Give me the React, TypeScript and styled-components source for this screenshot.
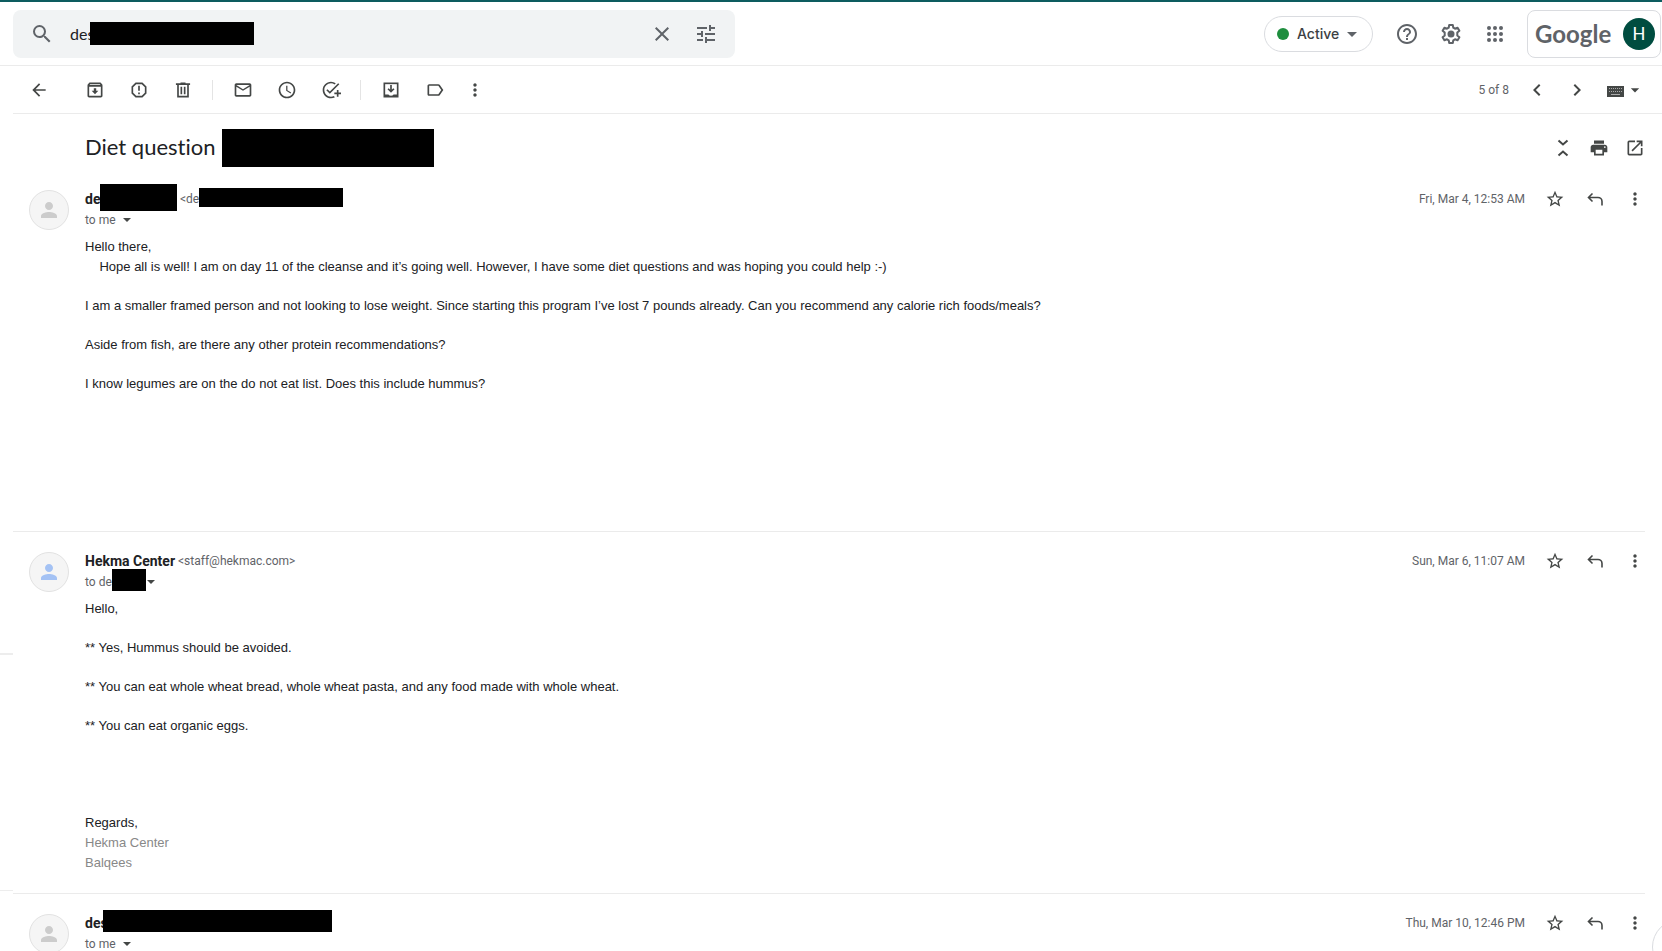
import React from 'react';
import styled, { createGlobalStyle } from 'styled-components';
import {
  MdSearch, MdClose, MdTune, MdHelpOutline, MdArrowDropDown,
  MdArrowBack, MdOutlineArchive, MdOutlineMailOutline, MdAccessTime, MdOutlineAddTask,
  MdOutlineLabel, MdMoreVert, MdChevronLeft, MdChevronRight,
  MdPrint, MdOpenInNew, MdStarBorder, MdPerson,
} from 'react-icons/md';

const GlobalStyle = createGlobalStyle`
  * { box-sizing: border-box; }
  body { margin: 0; background: #fff; color: #202124; font-family: Roboto, "Liberation Sans", sans-serif; }
  button { border: 0; padding: 0; background: none; font: inherit; color: inherit; cursor: pointer; }
  svg { display: block; flex: none; }
  p, h1, h2 { margin: 0; }
`;

const Page = styled.div`
  display: flex;
  flex-direction: column;
  height: 100vh;
  overflow: hidden;
  position: relative;
  border-top: 2px solid #0d5c5f;
`;

const Header = styled.header`
  display: flex;
  align-items: center;
  justify-content: space-between;
  flex: none;
  height: 64px;
  padding: 0 1px 0 13px;
  border-bottom: 1px solid #ebebeb;
`;

const SearchBox = styled.form`
  display: flex;
  align-items: center;
  flex: 0 1 722px;
  height: 48px;
  padding: 0 17px;
  gap: 20px;
  border-radius: 8px;
  background: #f1f3f4;
  color: #5f6368;
`;

const SearchField = styled.div`
  position: relative;
  display: flex;
  align-items: center;
  flex: 1;
  height: 100%;
  margin-left: -4px;
`;

const SearchInput = styled.input`
  width: 100%;
  border: 0;
  padding: 0;
  outline: 0;
  background: none;
  font: 16px Lato, sans-serif;
  color: #202124;
`;

const Redaction = styled.span<{ $w: number; $h: number; $raised?: boolean }>`
  flex: none;
  width: ${(p) => p.$w}px;
  height: ${(p) => p.$h}px;
  margin-bottom: ${(p) => (p.$raised ? 4 : 0)}px;
  background: #000;
`;

const SearchRedaction = styled(Redaction)`
  position: absolute;
  left: 20px;
`;

const HeaderActions = styled.div`
  display: flex;
  align-items: center;
  gap: 20px;
  color: #5f6368;
`;

const StatusButton = styled.button`
  display: flex;
  align-items: center;
  height: 36px;
  margin-right: 2px;
  padding: 0 8px 0 12px;
  border: 1px solid #dadce0;
  border-radius: 18px;
  color: #5f6368;
`;

const StatusDot = styled.span`
  width: 12px;
  height: 12px;
  border-radius: 50%;
  background: #1e8e3e;
`;

const StatusLabel = styled.span`
  min-width: 51px;
  padding-left: 8px;
  color: #3c4043;
  font: 500 14px Inter, sans-serif;
  text-align: left;
`;

const Account = styled.a`
  display: flex;
  align-items: center;
  justify-content: space-between;
  width: 134px;
  height: 48px;
  padding: 0 5px 0 7px;
  border: 1px solid #dadce0;
  border-radius: 8px;
  text-decoration: none;
`;

const Wordmark = styled.span`
  font: 700 24px/32px Lato, sans-serif;
  color: #5f6368;
`;

const AccountInitial = styled.span`
  width: 32px;
  border-radius: 50%;
  background: #004d40;
  color: #fff;
  font: 18px/32px Roboto, sans-serif;
  text-align: center;
`;

const Columns = styled.div`
  display: flex;
  flex: 1;
  min-height: 0;
`;

const Gutter = styled.aside`
  display: flex;
  flex-direction: column;
  gap: 235px;
  flex: none;
  width: 13px;
  padding-top: 587px;
`;

const GutterRule = styled.span<{ $h: number }>`
  flex: none;
  height: ${(p) => p.$h}px;
  background: #ededed;
`;

const Main = styled.main`
  flex: 1;
  min-width: 0;
`;

const Toolbar = styled.div`
  display: flex;
  align-items: center;
  justify-content: space-between;
  height: 48px;
  padding: 0 17px 0 16px;
  border-bottom: 1px solid #ebebeb;
  color: #444746;
`;

const Group = styled.div<{ $gap: number }>`
  display: flex;
  align-items: center;
  gap: ${(p) => p.$gap}px;
`;

const Divider = styled.span`
  width: 1px;
  height: 20px;
  margin-left: -1px;
  background: #e4e4e4;
`;

const IconButton = styled.button`
  display: flex;
  align-items: center;
  flex: none;
`;

const Back = styled(IconButton)`
  margin-right: 16px;
`;

const Muted = styled.span`
  font-size: 12px;
  color: #5f6368;
  white-space: nowrap;
`;

const SubjectRow = styled.div`
  display: flex;
  align-items: center;
  justify-content: space-between;
  height: 56px;
  padding: 12px 17px 0 72px;
  color: #444746;
`;

const Subject = styled.h1`
  display: flex;
  align-items: flex-start;
  gap: 6px;
  font: 22px/36px Lato, sans-serif;
  font-variant-ligatures: none;
  color: #202124;
`;

const Message = styled.article`
  display: flex;
  align-items: flex-start;
  gap: 16px;
  margin-right: 17px;
  padding: 19px 0 20px 16px;
  color: #444746;
  & + & { border-top: 1px solid #ebebeb; }
`;

const Avatar = styled.span<{ $color: string }>`
  display: flex;
  align-items: center;
  justify-content: center;
  flex: none;
  width: 40px;
  height: 40px;
  margin-top: 1px;
  border: 1px solid #e2e2e2;
  border-radius: 50%;
  background: #f5f5f5;
  color: ${(p) => p.$color};
`;

const Content = styled.div`
  flex: 1;
  min-width: 0;
`;

const Line = styled.div`
  display: flex;
  align-items: center;
  justify-content: space-between;
  height: 20px;
`;

const SubLine = styled.div<{ $gap: number }>`
  display: flex;
  align-items: center;
  gap: ${(p) => p.$gap}px;
  height: 22px;
`;

const SubText = styled.div`
  display: flex;
  align-items: center;
`;

const Sender = styled.div`
  display: flex;
  align-items: center;
  height: 20px;
`;

const Name = styled.h2<{ $cut?: number }>`
  width: ${(p) => (p.$cut ? `${p.$cut}px` : 'auto')};
  font-size: 14px;
  font-weight: 700;
  line-height: 20px;
  color: #202124;
  white-space: nowrap;
`;

const Address = styled(Muted)`
  margin-left: 3px;
`;

const Body = styled.div`
  padding-top: 6px;
  font: 13px/20px "Liberation Sans", Arial, sans-serif;
`;

const Paragraph = styled.p<{ $after?: number; $faint?: boolean }>`
  margin-bottom: ${(p) => p.$after ?? 19}px;
  color: ${(p) => (p.$faint ? '#888' : '#202124')};
`;

const ChatBubble = styled.span`
  position: absolute;
  right: -46px;
  bottom: -24px;
  width: 56px;
  height: 56px;
  border: 1px solid #dadce0;
  border-radius: 50%;
  background: #fff;
`;

const SettingsIcon = () => (
  <svg width="24" height="24" viewBox="0 0 24 24" fill="none" stroke="currentColor" strokeWidth="2" strokeLinejoin="round">
    <path d="M10.200 3h3.600l.5 2.700 1.700 1 2.600-1 1.800 3.100-2.100 1.800v2.800l2.100 1.800-1.800 3.100-2.600-1-1.700 1-.5 2.700h-3.600l-.5-2.700-1.700-1-2.600 1-1.800-3.100 2.100-1.800v-2.800L3.600 8.800l1.800-3.100 2.600 1 1.700-1z" />
    <circle cx="12" cy="12" r="3.500" fill="currentColor" stroke="none" />
  </svg>
);

const AppsIcon = () => (
  <svg width="24" height="24" viewBox="0 0 24 24" fill="currentColor">
    {[6, 12, 18].map((y) => [6, 12, 18].map((x) => <circle key={`${x}-${y}`} cx={x} cy={y} r="2" />))}
  </svg>
);

const SpamIcon = () => (
  <svg width="20" height="20" viewBox="0 0 24 24" fill="none" stroke="currentColor" strokeWidth="2">
    <path d="M8.300 4h7.400L20 8.300v7.400L15.700 20H8.300L4 15.700V8.300z" />
    <path d="M12 7v6M12 15v2" />
  </svg>
);

const TrashIcon = () => (
  <svg width="20" height="20" viewBox="0 0 24 24" fill="none" stroke="currentColor" strokeWidth="2">
    <path d="M6 5v15h12V5M3.500 5h17M9 4h6M10 8v9M14 8v9" />
  </svg>
);

const MoveIcon = () => (
  <svg width="20" height="20" viewBox="0 0 24 24" fill="none" stroke="currentColor" strokeWidth="2">
    <rect x="4" y="4" width="16" height="16" />
    <path d="M4 17.500h5c.5 1 1.500 1.500 3 1.500s2.500-.5 3-1.500h5V20H4z" fill="currentColor" stroke="none" />
    <path d="M12 6v7M8.500 10.500l3.500 3.500 3.500-3.500" />
  </svg>
);

const KeyboardIcon = () => (
  <svg width="20" height="20" viewBox="0 0 20 20" fill="none">
    <rect x="2" y="6" width="17" height="11" fill="#444746" />
    <path d="M4 8.500h13M4 11.500h13" stroke="#aaa" strokeDasharray="1 1" />
    <path d="M6 14.500h9" stroke="#aaa" />
  </svg>
);

const CollapseIcon = () => (
  <svg width="20" height="20" viewBox="0 0 20 20" fill="none" stroke="currentColor" strokeWidth="2">
    <path d="M5.500 2.500L10 6.500l4.500-4M5.500 17.500l4.500-4 4.500 4" />
  </svg>
);

const ReplyIcon = () => (
  <svg width="20" height="20" viewBox="0 0 20 20" fill="none" stroke="currentColor" strokeWidth="1.600">
    <path d="M7.500 4.500l-4 4 4 4M3.500 8.500H13c2.200 0 4 1.800 4 4v4" />
  </svg>
);

const Caret = () => (
  <svg width="8" height="4" viewBox="0 0 8 4" fill="currentColor"><path d="M0 0h8L4 4z" /></svg>
);

type ToolProps = { label: string; children: React.ReactNode };
const Tool = ({ label, children }: ToolProps) => (
  <IconButton type="button" aria-label={label} title={label}>{children}</IconButton>
);

type MailProps = {
  sender: React.ReactNode;
  to: React.ReactNode;
  caretGap?: number;
  date: string;
  tint?: string;
  children?: React.ReactNode;
};

const Mail = ({ sender, to, caretGap = 7, date, tint = '#ccc', children }: MailProps) => (
  <Message>
    <Avatar $color={tint}><MdPerson size={24} /></Avatar>
    <Content>
      <Line>
        <Sender>{sender}</Sender>
        <Group $gap={20}>
          <Muted as="time">{date}</Muted>
          <Tool label="Star"><MdStarBorder size={20} /></Tool>
          <Tool label="Reply"><ReplyIcon /></Tool>
          <Tool label="More"><MdMoreVert size={20} /></Tool>
        </Group>
      </Line>
      <SubLine $gap={caretGap}>
        <SubText>{to}</SubText>
        <Tool label="Show details"><Caret /></Tool>
      </SubLine>
      <Body>{children}</Body>
    </Content>
  </Message>
);

export default function App() {
  return (
    <Page>
      <GlobalStyle />
      <Header>
        <SearchBox role="search">
          <Tool label="Search"><MdSearch size={24} /></Tool>
          <SearchField>
            <SearchInput aria-label="Search mail" defaultValue="des" />
            <SearchRedaction $w={164} $h={23} />
          </SearchField>
          <Tool label="Clear search"><MdClose size={24} /></Tool>
          <Tool label="Search options"><MdTune size={24} /></Tool>
        </SearchBox>
        <HeaderActions>
          <StatusButton type="button" aria-haspopup="menu">
            <StatusDot />
            <StatusLabel>Active</StatusLabel>
            <MdArrowDropDown size={24} />
          </StatusButton>
          <Tool label="Support"><MdHelpOutline size={24} /></Tool>
          <Tool label="Settings"><SettingsIcon /></Tool>
          <Tool label="Apps"><AppsIcon /></Tool>
          <Account href="#account">
            <Wordmark>Google</Wordmark>
            <AccountInitial>H</AccountInitial>
          </Account>
        </HeaderActions>
      </Header>
      <Columns>
        <Gutter>
          <GutterRule $h={2} />
          <GutterRule $h={1} />
        </Gutter>
        <Main>
          <Toolbar>
            <Group $gap={20}>
              <Back type="button" aria-label="Back"><MdArrowBack size={20} /></Back>
              <Group $gap={24}>
                <Tool label="Archive"><MdOutlineArchive size={20} /></Tool>
                <Tool label="Report spam"><SpamIcon /></Tool>
                <Tool label="Delete"><TrashIcon /></Tool>
              </Group>
              <Divider />
              <Group $gap={24}>
                <Tool label="Mark as unread"><MdOutlineMailOutline size={20} /></Tool>
                <Tool label="Snooze"><MdAccessTime size={20} /></Tool>
                <Tool label="Add to tasks"><MdOutlineAddTask size={20} /></Tool>
              </Group>
              <Divider />
              <Group $gap={24}>
                <Tool label="Move to"><MoveIcon /></Tool>
                <Tool label="Labels"><MdOutlineLabel size={20} /></Tool>
              </Group>
              <Tool label="More"><MdMoreVert size={20} /></Tool>
            </Group>
            <Group $gap={16}>
              <Muted>5 of 8</Muted>
              <Tool label="Newer"><MdChevronLeft size={24} /></Tool>
              <Tool label="Older"><MdChevronRight size={24} /></Tool>
              <Tool label="Input tools"><KeyboardIcon /><MdArrowDropDown size={20} /></Tool>
            </Group>
          </Toolbar>
          <SubjectRow>
            <Subject>Diet question <Redaction $w={212} $h={38} /></Subject>
            <Group $gap={16}>
              <Tool label="Collapse all"><CollapseIcon /></Tool>
              <Tool label="Print all"><MdPrint size={20} /></Tool>
              <Tool label="In new window"><MdOpenInNew size={20} /></Tool>
            </Group>
          </SubjectRow>
          <Mail
            sender={<><Name $cut={15}>de</Name><Redaction $w={77} $h={27} $raised /><Address>&lt;de</Address><Redaction $w={144} $h={19} $raised /></>}
            to={<Muted>to me</Muted>}
            date="Fri, Mar 4, 12:53 AM"
          >
            <Paragraph $after={0}>Hello there,</Paragraph>
            <Paragraph>{'\u00a0\u00a0\u00a0 '}Hope all is well! I am on day 11 of the cleanse and it’s going well. However, I have some diet questions and was hoping you could help :-)</Paragraph>
            <Paragraph>I am a smaller framed person and not looking to lose weight. Since starting this program I’ve lost 7 pounds already. Can you recommend any calorie rich foods/meals?</Paragraph>
            <Paragraph>Aside from fish, are there any other protein recommendations?</Paragraph>
            <Paragraph $after={117}>I know legumes are on the do not eat list. Does this include hummus?</Paragraph>
          </Mail>
          <Mail
            sender={<><Name>Hekma Center</Name><Address>&lt;staff@hekmac.com&gt;</Address></>}
            to={<><Muted>to de</Muted><Redaction $w={34} $h={22} $raised /></>}
            caretGap={1}
            date="Sun, Mar 6, 11:07 AM"
            tint="#a4c2f4"
          >
            <Paragraph>Hello,</Paragraph>
            <Paragraph>** Yes, Hummus should be avoided.</Paragraph>
            <Paragraph>** You can eat whole wheat bread, whole wheat pasta, and any food made with whole wheat.</Paragraph>
            <Paragraph $after={77}>** You can eat organic eggs.</Paragraph>
            <Paragraph $after={0}>Regards,</Paragraph>
            <Paragraph $after={0} $faint>Hekma Center</Paragraph>
            <Paragraph $after={0} $faint>Balqees</Paragraph>
          </Mail>
          <Mail
            sender={<><Name $cut={18}>des</Name><Redaction $w={229} $h={22} $raised /></>}
            to={<Muted>to me</Muted>}
            date="Thu, Mar 10, 12:46 PM"
          />
        </Main>
      </Columns>
      <ChatBubble />
    </Page>
  );
}
